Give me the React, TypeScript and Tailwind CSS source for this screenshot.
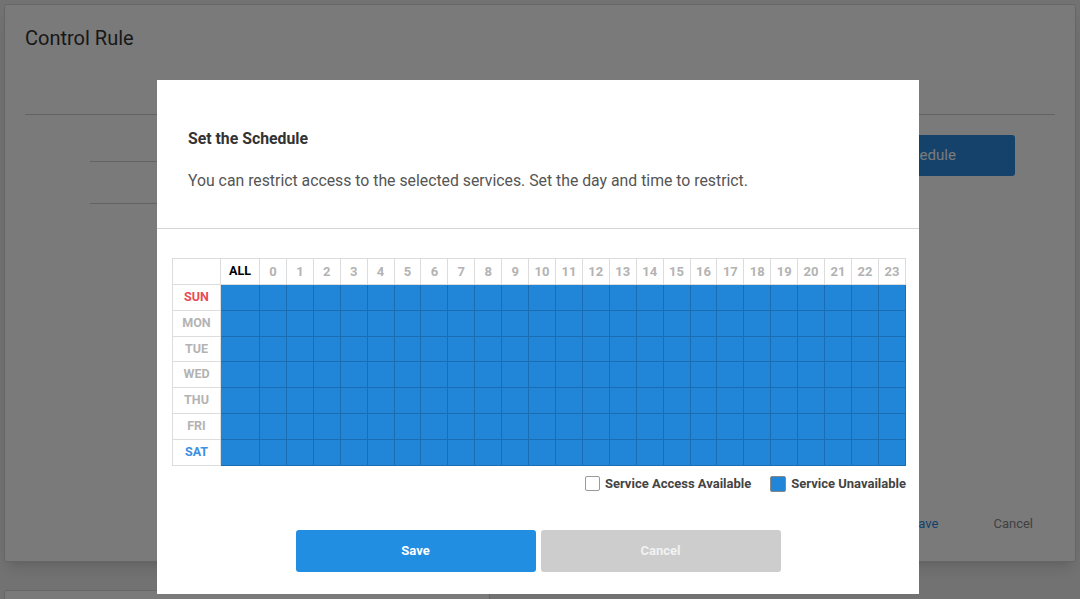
import React from 'react';

const hours = Array.from({ length: 24 }, (_, i) => i);
const days = [
  { label: 'SUN', color: 'text-[#ea4b55]' },
  { label: 'MON', color: 'text-[#b3b3b3]' },
  { label: 'TUE', color: 'text-[#b3b3b3]' },
  { label: 'WED', color: 'text-[#b3b3b3]' },
  { label: 'THU', color: 'text-[#b3b3b3]' },
  { label: 'FRI', color: 'text-[#b3b3b3]' },
  { label: 'SAT', color: 'text-[#3d8fe3]' },
];

export default function App() {
  return (
    <div className="relative h-[599px] w-[1080px] overflow-hidden bg-[#efefef] font-['Roboto',sans-serif]">
      {/* Page behind the dialog */}
      <div className="px-[4px] pt-[4px]">
        <div className="h-[558px] rounded-[3px] border border-[#d6d6d6] bg-white px-[20px] shadow-lg">
          <h1 className="pt-[20px] text-[20px] leading-[26px] text-[#333]">Control Rule</h1>
          <div className="mt-[63px] border-b border-[#d0d0d0]" />
          <div className="flex">
            <div className="ml-[65px] w-[300px]">
              <div className="h-[47px] border-b border-[#d0d0d0]" />
              <div className="h-[42px] border-b border-[#d0d0d0]" />
            </div>
            <div className="flex-1" />
            <button className="mr-[40px] mt-[20px] h-[41px] w-[205px] rounded-[3px] bg-[#2b8be0] text-[15px] text-white">
              Set Schedule
            </button>
          </div>
          <div className="mt-[310px] flex justify-end gap-[55px] pr-[22px] text-[13px]">
            <span className="text-[#2b8be0]">Save</span>
            <span className="text-[#888]">Cancel</span>
          </div>
        </div>
        <div className="mt-[28px] flex gap-[30px]">
          <div className="h-[40px] w-[486px] rounded-[3px] border border-[#d6d6d6] bg-white" />
        </div>
      </div>

      {/* Overlay */}
      <div className="fixed inset-0 bg-black/[0.52]" />

      {/* Dialog */}
      <div className="fixed left-[157px] top-[80px] w-[762px] bg-white">
        <div className="px-[31px] pb-[37px] pt-[49px]">
          <h2 className="text-[15.8px] font-bold leading-[20px] text-[#333]">Set the Schedule</h2>
          <p className="mt-[22px] text-[15.8px] leading-[20px] text-[#555]">
            You can restrict access to the selected services. Set the day and time to restrict.
          </p>
        </div>
        <div className="border-t border-[#d4d4d4]" />
        <div className="pl-[15px] pr-[13px] pt-[29px]">
          <table className="w-[734px] table-fixed border-collapse text-[12.5px] font-bold">
            <colgroup>
              <col className="w-[48px]" />
              <col className="w-[39px]" />
              {hours.map((h) => (
                <col key={h} />
              ))}
            </colgroup>
            <thead>
              <tr className="h-[26px]">
                <th className="border border-[#dcdcdc]" />
                <th className="border border-[#dcdcdc] text-center text-black">ALL</th>
                {hours.map((h) => (
                  <th key={h} className="border border-[#dcdcdc] text-center text-[13px] text-[#b3b3b3]">
                    {h}
                  </th>
                ))}
              </tr>
            </thead>
            <tbody>
              {days.map((d) => (
                <tr key={d.label} className="h-[25.8px]">
                  <td className={`border border-[#dcdcdc] text-center ${d.color}`}>{d.label}</td>
                  <td className="border border-[#1a6db3] bg-[#2185d8]" />
                  {hours.map((h) => (
                    <td key={h} className="border border-[#1a6db3] bg-[#2185d8]" />
                  ))}
                </tr>
              ))}
            </tbody>
          </table>
          <div className="mt-[10px] flex items-center justify-end gap-[19px] text-[13px] font-bold leading-[16px] text-[#444]">
            <div className="flex items-center gap-[5px]">
              <span className="h-[15px] w-[15px] rounded-[2px] border border-[#999] bg-white" />
              <span>Service Access Available</span>
            </div>
            <div className="flex items-center gap-[5px]">
              <span className="h-[16px] w-[16px] rounded-[2px] border border-[#888] bg-[#2185d8]" />
              <span>Service Unavailable</span>
            </div>
          </div>
        </div>
        <div className="flex justify-center gap-[5px] pb-[22px] pt-[38px]">
          <button className="h-[42px] w-[240px] rounded-[3px] bg-[#228ee2] text-[13px] font-bold text-white">
            Save
          </button>
          <button className="h-[42px] w-[240px] rounded-[3px] bg-[#cdcdcd] text-[13px] font-bold text-[#f2f2f2]">
            Cancel
          </button>
        </div>
      </div>
    </div>
  );
}
